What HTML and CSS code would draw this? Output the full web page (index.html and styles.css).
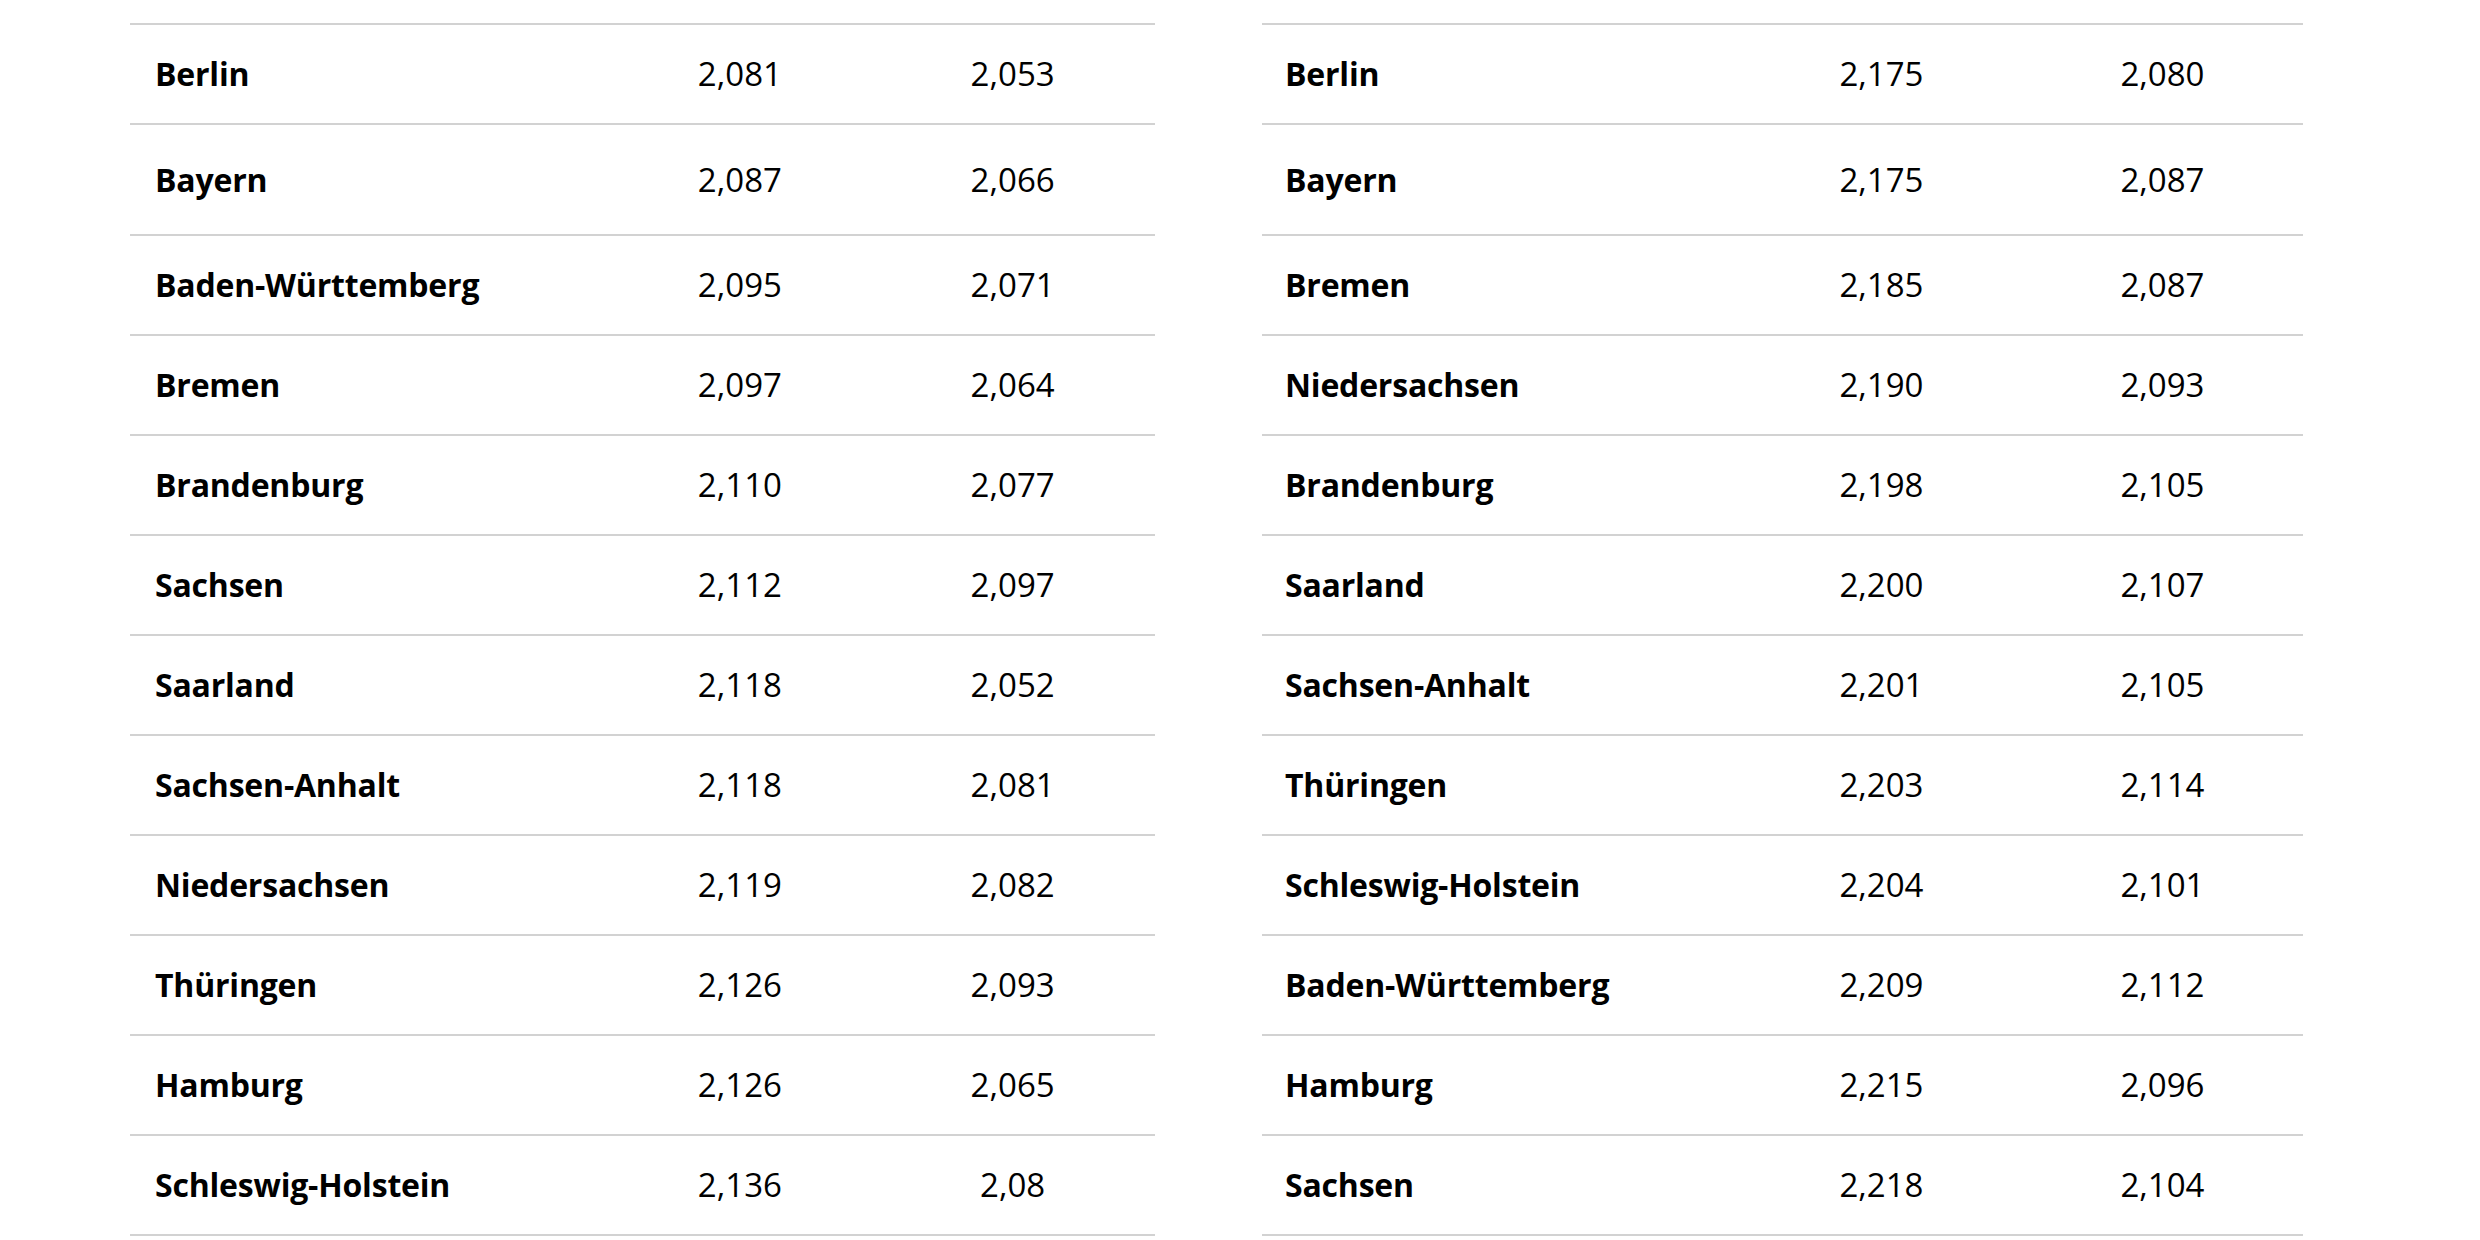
FILE: index.html
```html
<!DOCTYPE html>
<html lang="de">
<head>
<meta charset="utf-8">
<title>Tabelle</title>
<link rel="stylesheet" href="styles.css">
</head>
<body>
<div class="page">
  <table class="data left">
    <colgroup><col class="c-name"><col class="c-num"><col class="c-num"></colgroup>
    <tbody>
      <tr><th>Berlin</th><td>2,081</td><td>2,053</td></tr>
      <tr class="tall"><th>Bayern</th><td>2,087</td><td>2,066</td></tr>
      <tr><th>Baden-Württemberg</th><td>2,095</td><td>2,071</td></tr>
      <tr><th>Bremen</th><td>2,097</td><td>2,064</td></tr>
      <tr><th>Brandenburg</th><td>2,110</td><td>2,077</td></tr>
      <tr><th>Sachsen</th><td>2,112</td><td>2,097</td></tr>
      <tr><th>Saarland</th><td>2,118</td><td>2,052</td></tr>
      <tr><th>Sachsen-Anhalt</th><td>2,118</td><td>2,081</td></tr>
      <tr><th>Niedersachsen</th><td>2,119</td><td>2,082</td></tr>
      <tr><th>Thüringen</th><td>2,126</td><td>2,093</td></tr>
      <tr><th>Hamburg</th><td>2,126</td><td>2,065</td></tr>
      <tr><th>Schleswig-Holstein</th><td>2,136</td><td>2,08</td></tr>
    </tbody>
  </table>
  <table class="data right">
    <colgroup><col class="c-name"><col class="c-num"><col class="c-num"></colgroup>
    <tbody>
      <tr><th>Berlin</th><td>2,175</td><td>2,080</td></tr>
      <tr class="tall"><th>Bayern</th><td>2,175</td><td>2,087</td></tr>
      <tr><th>Bremen</th><td>2,185</td><td>2,087</td></tr>
      <tr><th>Niedersachsen</th><td>2,190</td><td>2,093</td></tr>
      <tr><th>Brandenburg</th><td>2,198</td><td>2,105</td></tr>
      <tr><th>Saarland</th><td>2,200</td><td>2,107</td></tr>
      <tr><th>Sachsen-Anhalt</th><td>2,201</td><td>2,105</td></tr>
      <tr><th>Thüringen</th><td>2,203</td><td>2,114</td></tr>
      <tr><th>Schleswig-Holstein</th><td>2,204</td><td>2,101</td></tr>
      <tr><th>Baden-Württemberg</th><td>2,209</td><td>2,112</td></tr>
      <tr><th>Hamburg</th><td>2,215</td><td>2,096</td></tr>
      <tr><th>Sachsen</th><td>2,218</td><td>2,104</td></tr>
    </tbody>
  </table>
</div>
</body>
</html>
```

FILE: styles.css
```css
html, body {
  margin: 0;
  padding: 0;
  background: #ffffff;
}

body {
  font-family: "Open Sans", "Noto Sans", "Liberation Sans", sans-serif;
  color: #000000;
}

.page {
  display: grid;
  grid-template-columns: 1025px 1041px;
  column-gap: 107px;
  align-items: start;
  padding: 23px 0 0 130px;
}

.data {
  width: 100%;
  border-collapse: collapse;
  table-layout: fixed;
}

.data .c-name { width: 46%; }
.data .c-num { width: 27%; }

.data tr {
  height: 100px;
  border-top: 2px solid #d2d2d2;
}

.data tr:last-child {
  border-bottom: 2px solid #d2d2d2;
}

.data tr.tall {
  height: 111px;
}

.data th,
.data td {
  padding: 0;
  vertical-align: middle;
  line-height: 40px;
  white-space: nowrap;
}

.data th {
  text-align: left;
  font-size: 32px;
  font-weight: 700;
  padding-left: 25px;
  letter-spacing: -0.2px;
}

.right th {
  padding-left: 23px;
}

.data td {
  text-align: center;
  font-size: 33px;
  font-weight: 400;
}

.left td:last-child {
  padding-right: 8px;
}
```
